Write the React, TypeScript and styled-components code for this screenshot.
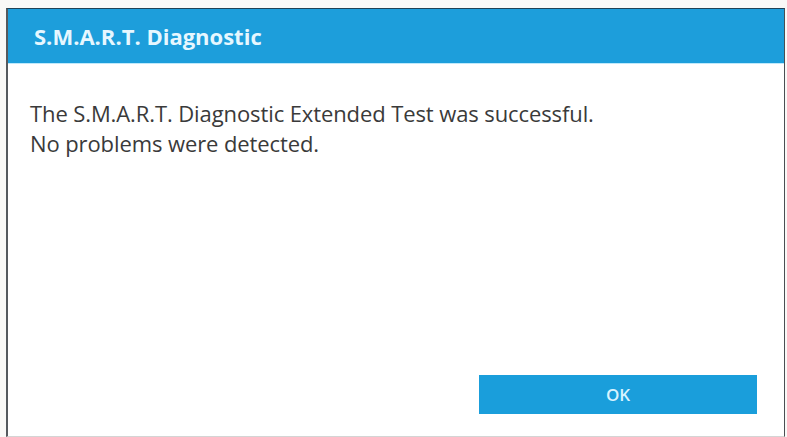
import React from "react";
import styled, { createGlobalStyle } from "styled-components";

const Global = createGlobalStyle`
  html, body { margin: 0; padding: 0; background: #f9f9f7; }
  body { font-family: "Open Sans", "Noto Sans", sans-serif; }
  #root { width: 787px; height: 437px; overflow: hidden; }
`;

const Dialog = styled.div`
  box-sizing: border-box;
  margin: 8px 0 0 6px;
  width: 779px;
  height: 429px;
  background: #ffffff;
  border-top: 1px solid #1f4256;
  border-left: 2px solid #555a5e;
  border-right: 1px solid #4a4e52;
  border-bottom: 1px solid #d4d4d4;
  display: flex;
  flex-direction: column;
`;

const TitleBar = styled.div`
  height: 54px;
  background: #1d9edb;
  display: flex;
  align-items: center;
  padding-left: 26px;
  border-bottom: 1px solid #bfe9fb;
`;

const Title = styled.h1`
  margin: 0;
  font-size: 22px;
  font-weight: 700;
  color: #e6f7ff;
`;

const Content = styled.div`
  flex: 1;
  padding: 34px 0 0 22px;
`;

const Message = styled.p`
  margin: 0;
  font-size: 22px;
  line-height: 30px;
  color: #3a3a3a;
  letter-spacing: -0.1px;
`;

const Footer = styled.div`
  display: flex;
  justify-content: flex-end;
  padding: 0 27px 22px 0;
`;

const OkButton = styled.button`
  width: 278px;
  height: 39px;
  border: none;
  background: #1a9edb;
  color: #d8f3ff;
  font-family: "Open Sans", "Noto Sans", sans-serif;
  font-size: 17px;
  font-weight: 600;
  cursor: pointer;
`;

export default function App() {
  return (
    <>
      <Global />
      <Dialog>
        <TitleBar>
          <Title>S.M.A.R.T. Diagnostic</Title>
        </TitleBar>
        <Content>
          <Message>The S.M.A.R.T. Diagnostic Extended Test was successful.</Message>
          <Message>No problems were detected.</Message>
        </Content>
        <Footer>
          <OkButton>OK</OkButton>
        </Footer>
      </Dialog>
    </>
  );
}
